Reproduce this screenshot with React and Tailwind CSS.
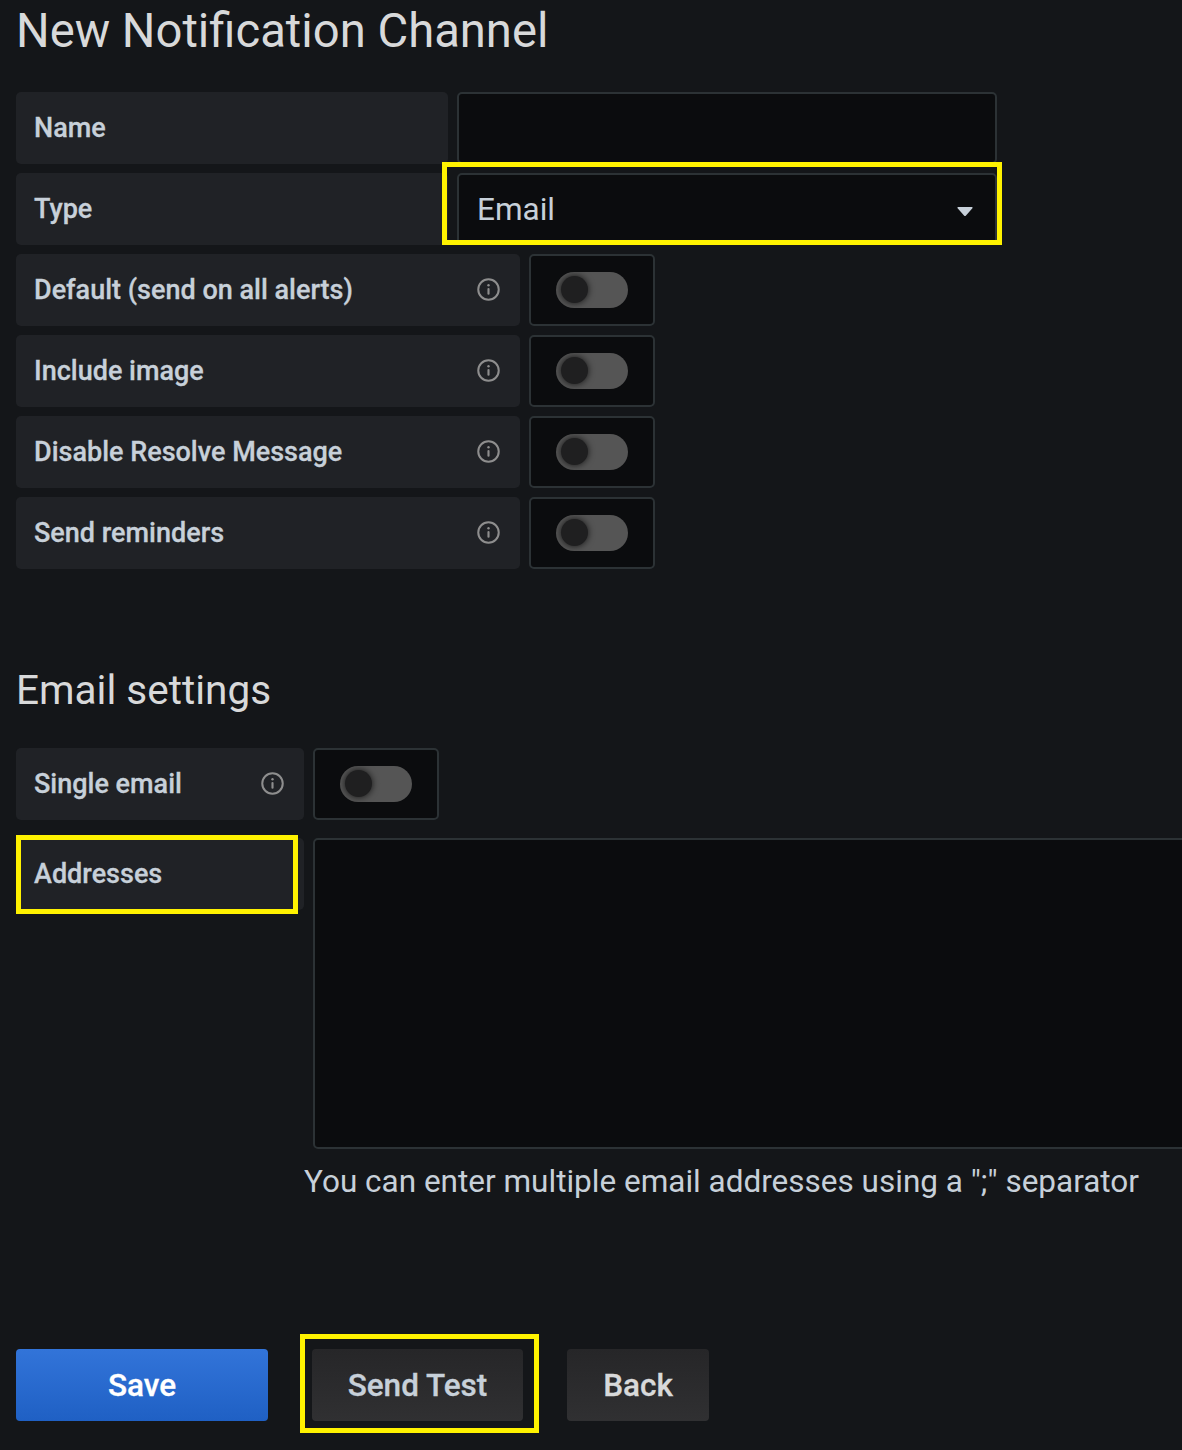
function InfoIcon() {
  return (
    <svg className="-mt-px size-[27px] shrink-0 text-[#8e8e8e]" viewBox="0 0 24 24" fill="currentColor">
      <path d="M12 2a10 10 0 1 0 0 20 10 10 0 0 0 0-20Zm0 18.2a8.2 8.2 0 1 1 0-16.4 8.2 8.2 0 0 1 0 16.4Z" />
      <path d="M12 10.7a.95.95 0 0 0-.95.95v4.1a.95.95 0 0 0 1.9 0v-4.1a.95.95 0 0 0-.95-.95Z" />
      <circle cx="12" cy="8.2" r="1.05" />
    </svg>
  );
}

function Label({ children, width, info }) {
  return (
    <div className={`flex h-[72px] shrink-0 items-center justify-between rounded-[5px] bg-[#202226] pr-[18px] pl-[18px] text-[27px] leading-none font-medium text-[#c7d0d9] ${width}`}>
      <span className="whitespace-nowrap [-webkit-text-stroke:0.3px_currentColor]">{children}</span>
      {info && <InfoIcon />}
    </div>
  );
}

function Toggle() {
  return (
    <div className="flex h-[72px] w-[126px] shrink-0 items-center justify-center rounded-[5px] border-2 border-[#2c3235] bg-[#0b0c0e]">
      <button type="button" role="switch" aria-checked="false" className="flex h-9 w-[72px] items-center overflow-hidden rounded-full bg-[#555555] pl-[5px]">
        <span className="-mt-px size-[27px] rounded-full bg-[#1f1f20] shadow-[0_0_7px_rgba(0,0,0,0.8)]" />
      </button>
    </div>
  );
}

function Highlight({ className }) {
  return <div className={`pointer-events-none absolute border-[5px] border-[#fff200] ${className}`} />;
}

const options = ["Default (send on all alerts)", "Include image", "Disable Resolve Message", "Send reminders"];

export default function App() {
  return (
    <main className="h-[1450px] w-[1182px] overflow-hidden bg-[#141619] pl-4 font-[Roboto,sans-serif] text-[#c7d0d9]">
      <h1 className="h-[92px] pt-[3px] text-[47.2px] leading-[56px] whitespace-nowrap text-[#d8d9da]">New Notification Channel</h1>
      <div className="flex flex-col gap-[9px]">
        <div className="flex gap-[9px]">
          <Label width="w-[432px]">Name</Label>
          <input aria-label="Name" className="h-[72px] w-[540px] rounded-[5px] border-2 border-[#2c3235] bg-[#0b0c0e]" />
        </div>
        <div className="relative flex gap-[9px]">
          <Label width="w-[432px]">Type</Label>
          <div className="flex h-[72px] w-[540px] items-center justify-between rounded-[5px] border-2 border-[#2c3235] bg-[#0b0c0e] pr-[22px] pl-[18px] text-[31.5px] leading-none">
            <span className="pt-0.5">Email</span>
            <svg className="mt-1 h-[9px] w-4" viewBox="0 0 16 9" fill="currentColor">
              <path d="M1.2 0h13.6c.8 0 1.1.8.6 1.3L9 8.4c-.6.7-1.4.7-2 0L.6 1.3C.1.8.4 0 1.2 0Z" />
            </svg>
          </div>
          <Highlight className="-top-[11px] left-[426px] h-[83px] w-[560px]" />
        </div>
        {options.map((name) => (
          <div key={name} className="flex gap-[9px]">
            <Label width="w-[504px]" info>{name}</Label>
            <Toggle />
          </div>
        ))}
      </div>

      <h2 className="mt-[95px] h-[84px] text-[40.5px] leading-[52px] whitespace-nowrap text-[#d8d9da]">Email settings</h2>
      <div className="flex gap-[9px]">
        <Label width="w-[288px]" info>Single email</Label>
        <Toggle />
      </div>
      <div className="relative mt-[18px] flex gap-[9px]">
        <Label width="w-[288px]">Addresses</Label>
        <textarea aria-label="Addresses" className="block h-[311px] w-[900px] shrink-0 resize-none rounded-[5px] border-2 border-[#2c3235] bg-[#0b0c0e]" />
        <Highlight className="-top-[3px] left-0 h-[79px] w-[282px]" />
      </div>
      <p className="mt-[9px] ml-[288px] h-[191px] text-[31.5px] leading-[47px] whitespace-nowrap">You can enter multiple email addresses using a ";" separator</p>
      <div className="flex gap-11 text-[31.5px] leading-none font-medium [-webkit-text-stroke:0.3px_currentColor]">
        <button type="button" className="h-[72px] w-[252px] rounded-[4px] bg-linear-to-b from-[#3274d9] to-[#1f60c4] pt-0.5 text-white">Save</button>
        <div className="relative">
          <button type="button" className="h-[72px] w-[211px] rounded-[4px] bg-linear-to-b from-[#262628] to-[#303032] pt-0.5">Send Test</button>
          <Highlight className="-top-[15px] -left-3 h-[99px] w-[239px]" />
        </div>
        <button type="button" className="h-[72px] w-[142px] rounded-[4px] bg-linear-to-b from-[#262628] to-[#303032] pt-0.5 text-[#d8d9da]">Back</button>
      </div>
    </main>
  );
}
